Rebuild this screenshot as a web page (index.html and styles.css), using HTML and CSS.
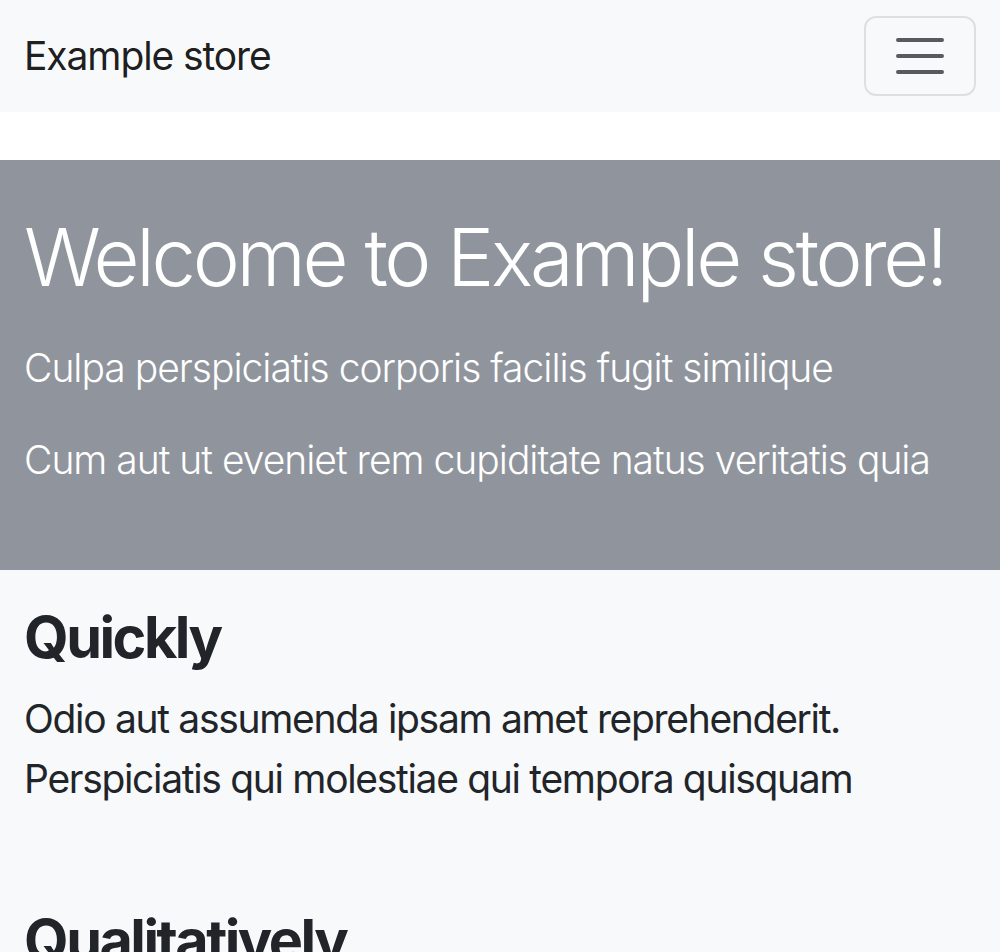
FILE: index.html
```html
<!DOCTYPE html>
<html lang="en">
<head>
<meta charset="utf-8">
<title>Example store</title>
<link rel="stylesheet" href="styles.css">
</head>
<body>
<nav class="navbar">
  <a class="brand" href="#">Example store</a>
  <button class="toggler" type="button" aria-label="Toggle navigation">
    <svg class="toggler-icon" viewBox="0 0 30 30" width="60" height="60" aria-hidden="true">
      <path d="M4 7h22M4 15h22M4 23h22" stroke="rgba(33,37,41,0.75)" stroke-width="2" stroke-linecap="round" stroke-miterlimit="10" fill="none"/>
    </svg>
  </button>
</nav>
<header class="hero">
  <h1 class="hero-title">Welcome to Example store!</h1>
  <p class="lead">Culpa perspiciatis corporis facilis fugit similique</p>
  <p class="lead">Cum aut ut eveniet rem cupiditate natus veritatis quia</p>
</header>
<main class="features">
  <section class="feature">
    <h2 class="feature-title">Quickly</h2>
    <p class="feature-text">Odio aut assumenda ipsam amet reprehenderit. Perspiciatis qui molestiae qui tempora quisquam</p>
  </section>
  <section class="feature">
    <h2 class="feature-title">Qualitatively</h2>
    <p class="feature-text">Voluptatem sint nulla quis dolorum fugiat. Amet repellat ut natus dolor</p>
  </section>
</main>
</body>
</html>
```
FILE: styles.css
```css
html, body {
  margin: 0;
  padding: 0;
}
body {
  font-family: Inter, "Noto Sans", "Liberation Sans", sans-serif;
  color: #212529;
  background: #ffffff;
  line-height: 1.5;
}
.navbar {
  height: 112px;
  box-sizing: border-box;
  background: #f8f9fa;
  display: flex;
  align-items: center;
  justify-content: space-between;
  padding: 0 24px;
  margin-bottom: 48px;
}
.brand {
  font-size: 39px;
  color: rgba(0, 0, 0, 0.9);
  text-decoration: none;
  letter-spacing: -1.1px;
}
.toggler {
  display: flex;
  align-items: center;
  justify-content: center;
  padding: 8px 24px;
  border: 2px solid rgba(0, 0, 0, 0.1);
  border-radius: 12px;
  background: transparent;
}
.toggler-icon {
  display: block;
}
.hero {
  background: #90959d;
  color: #ffffff;
  padding: 48px 24px;
}
.hero-title {
  margin: 0 0 32px;
  font-size: 79.5px;
  font-weight: 300;
  line-height: 98px;
  letter-spacing: -3.3px;
  white-space: nowrap;
}
.lead {
  margin: 0 0 32px;
  font-size: 39px;
  font-weight: 300;
  line-height: 60px;
  letter-spacing: -1px;
}
.features {
  background: #f8f9fa;
}
.feature {
  padding: 32px 24px;
}
.feature-title {
  margin: 0 0 16px;
  font-size: 57.5px;
  font-weight: 700;
  line-height: 71px;
  letter-spacing: -2.5px;
}
.feature-text {
  margin: 0 0 32px;
  font-size: 39px;
  line-height: 60px;
  letter-spacing: -1.32px;
}
```
